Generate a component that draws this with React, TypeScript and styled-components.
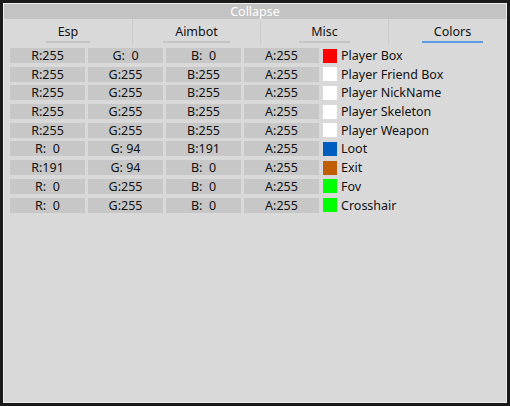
import React, { useState } from 'react'
import styled, { createGlobalStyle } from 'styled-components'

const GlobalStyle = createGlobalStyle`
  html, body {
    margin: 0;
    padding: 0;
    background: #1a1a1a;
  }
  body {
    font-family: "Noto Sans", "DejaVu Sans", sans-serif;
  }
`

const Screen = styled.div`
  width: 510px;
  height: 406px;
  padding: 3px;
  box-sizing: border-box;
`

const Window = styled.div`
  width: 504px;
  height: 400px;
  box-sizing: border-box;
  border: 1px solid #eeeeee;
  background: #d9d9d9;
  display: flex;
  flex-direction: column;
  overflow: hidden;
`

const TitleBar = styled.div`
  height: 15px;
  background: #c3c3c3;
  color: #ffffff;
  font-size: 12.5px;
  line-height: 15px;
  text-align: center;
`

const Tabs = styled.div`
  display: grid;
  grid-template-columns: repeat(4, 128px);
  height: 25px;
`

const Tab = styled.div`
  display: flex;
  justify-content: center;
  align-items: flex-end;
  padding-bottom: 1px;
  & + & {
    border-left: 1px solid #cbcbcb;
  }
`

const TabLabel = styled.span<{ $active?: boolean }>`
  padding: 0 12px;
  font-size: 12.5px;
  line-height: 19px;
  color: #111;
  border-bottom: 2px solid ${p => (p.$active ? '#5b9be3' : '#c4c4c4')};
  cursor: pointer;
`

const Rows = styled.div`
  display: flex;
  flex-direction: column;
  gap: 3.7px;
  padding: 4px 6px 0;
`

const Row = styled.div`
  display: flex;
  align-items: center;
  height: 15px;
`

const Cell = styled.div`
  width: 75px;
  height: 15px;
  margin-right: 3px;
  background: #c7c7c7;
  color: #111;
  font-size: 12.5px;
  line-height: 15px;
  text-align: center;
  white-space: pre;
`

const Swatch = styled.div<{ $color: string }>`
  width: 14px;
  height: 14px;
  margin-left: 1px;
  background: ${p => p.$color};
`

const Label = styled.span`
  margin-left: 4px;
  font-size: 12.5px;
  line-height: 15px;
  color: #111;
  white-space: nowrap;
`

type ColorItem = { name: string; r: number; g: number; b: number; a: number }

const items: ColorItem[] = [
  { name: 'Player Box', r: 255, g: 0, b: 0, a: 255 },
  { name: 'Player Friend Box', r: 255, g: 255, b: 255, a: 255 },
  { name: 'Player NickName', r: 255, g: 255, b: 255, a: 255 },
  { name: 'Player Skeleton', r: 255, g: 255, b: 255, a: 255 },
  { name: 'Player Weapon', r: 255, g: 255, b: 255, a: 255 },
  { name: 'Loot', r: 0, g: 94, b: 191, a: 255 },
  { name: 'Exit', r: 191, g: 94, b: 0, a: 255 },
  { name: 'Fov', r: 0, g: 255, b: 0, a: 255 },
  { name: 'Crosshair', r: 0, g: 255, b: 0, a: 255 },
]

// values are shown like printf("%3d")
const pad = (n: number) => String(n).padStart(3, ' ')

const tabs = ['Esp', 'Aimbot', 'Misc', 'Colors']

export default function App() {
  const [active, setActive] = useState('Colors')

  return (
    <Screen>
      <GlobalStyle />
      <Window>
        <TitleBar>Collapse</TitleBar>
        <Tabs>
          {tabs.map(t => (
            <Tab key={t}>
              <TabLabel $active={t === active} onClick={() => setActive(t)}>{t}</TabLabel>
            </Tab>
          ))}
        </Tabs>
        <Rows>
          {items.map(it => (
            <Row key={it.name}>
              <Cell>R:{pad(it.r)}</Cell>
              <Cell>G:{pad(it.g)}</Cell>
              <Cell>B:{pad(it.b)}</Cell>
              <Cell>A:{pad(it.a)}</Cell>
              <Swatch $color={`rgb(${it.r}, ${it.g}, ${it.b})`} />
              <Label>{it.name}</Label>
            </Row>
          ))}
        </Rows>
      </Window>
    </Screen>
  )
}
